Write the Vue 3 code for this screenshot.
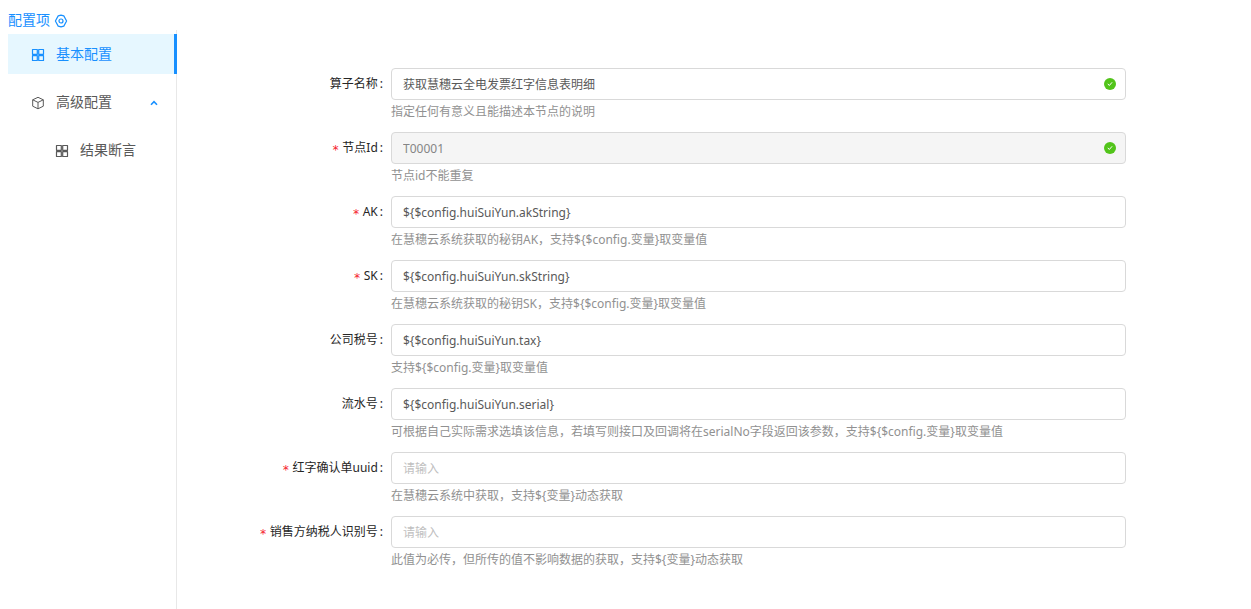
<template>
  <div class="config-page">
    <aside class="sidebar">
      <div class="sidebar-title">
        <span>配置项</span>
        <svg class="title-icon" viewBox="0 0 14 14">
          <path d="M4.2 1.9L7 1.2l2.8.7L12.6 7l-2.8 5.1-2.8.7-2.8-.7L1.4 7z" />
          <circle cx="7" cy="7" r="2" />
        </svg>
      </div>
      <ul class="menu">
        <li
          v-for="item in menuItems"
          :key="item.key"
          class="menu-item"
          :class="{ active: item.key === activeKey, nested: item.nested }"
          @click="selectItem(item)"
        >
          <svg v-if="item.icon === 'grid'" class="menu-icon grid" viewBox="0 0 14 14">
            <rect x="1.5" y="1.5" width="4.8" height="4.8" />
            <rect x="7.7" y="1.5" width="4.8" height="4.8" />
            <rect x="1.5" y="7.7" width="4.8" height="4.8" />
            <rect x="7.7" y="7.7" width="4.8" height="4.8" />
          </svg>
          <svg v-else class="menu-icon" viewBox="0 0 14 14">
            <path d="M7 1.3l5.3 2.5v6.4L7 12.8 1.7 10.2V3.8zM1.7 3.8L7 6.4l5.3-2.6M7 6.4v6.4" />
          </svg>
          <span class="menu-text">{{ item.label }}</span>
          <svg v-if="item.key === 'advanced'" class="menu-arrow" viewBox="0 0 8 6">
            <path d="M1 4.7L4 1.7l3 3" />
          </svg>
        </li>
      </ul>
    </aside>

    <form class="form" @submit.prevent>
      <div v-for="field in fields" :key="field.key" class="form-item">
        <label class="form-label" :for="field.key">
          <span v-if="field.required" class="required">*</span>
          <span class="label-text">{{ field.label }}</span>
          <span class="colon">:</span>
        </label>
        <div class="form-control">
          <div class="input-wrap" :class="{ disabled: field.disabled }">
            <input
              :id="field.key"
              v-model="field.value"
              type="text"
              placeholder="请输入"
              :disabled="field.disabled"
              autocomplete="off"
              spellcheck="false"
            />
            <svg v-if="field.valid" class="success-icon" viewBox="0 0 12 12">
              <circle cx="6" cy="6" r="6" />
              <path d="M3.8 5.8l1.5 1.7 2.8-3.2" />
            </svg>
          </div>
          <div class="form-extra">{{ field.extra }}</div>
        </div>
      </div>
    </form>
  </div>
</template>

<script setup>
import { ref, reactive } from 'vue';

const activeKey = ref('basic');

const menuItems = [
  { key: 'basic', label: '基本配置', icon: 'grid' },
  { key: 'advanced', label: '高级配置', icon: 'box' },
  { key: 'assert', label: '结果断言', icon: 'grid', nested: true }
];

const fields = reactive([
  {
    key: 'name',
    label: '算子名称',
    value: '获取慧穗云全电发票红字信息表明细',
    extra: '指定任何有意义且能描述本节点的说明',
    valid: true
  },
  {
    key: 'nodeId',
    label: '节点Id',
    value: 'T00001',
    extra: '节点id不能重复',
    required: true,
    disabled: true,
    valid: true
  },
  {
    key: 'ak',
    label: 'AK',
    value: '${$config.huiSuiYun.akString}',
    extra: '在慧穗云系统获取的秘钥AK，支持${$config.变量}取变量值',
    required: true
  },
  {
    key: 'sk',
    label: 'SK',
    value: '${$config.huiSuiYun.skString}',
    extra: '在慧穗云系统获取的秘钥SK，支持${$config.变量}取变量值',
    required: true
  },
  {
    key: 'tax',
    label: '公司税号',
    value: '${$config.huiSuiYun.tax}',
    extra: '支持${$config.变量}取变量值'
  },
  {
    key: 'serial',
    label: '流水号',
    value: '${$config.huiSuiYun.serial}',
    extra: '可根据自己实际需求选填该信息，若填写则接口及回调将在serialNo字段返回该参数，支持${$config.变量}取变量值'
  },
  {
    key: 'uuid',
    label: '红字确认单uuid',
    value: '',
    extra: '在慧穗云系统中获取，支持${变量}动态获取',
    required: true
  },
  {
    key: 'taxpayer',
    label: '销售方纳税人识别号',
    value: '',
    extra: '此值为必传，但所传的值不影响数据的获取，支持${变量}动态获取',
    required: true
  }
]);

function selectItem(item) {
  if (item.key !== 'advanced') {
    activeKey.value = item.key;
  }
}
</script>

<style>
body {
  margin: 0;
  background: #fff;
}
</style>

<style scoped>
.config-page {
  display: flex;
  height: 609px;
  overflow: hidden;
  font-family: 'Noto Sans', 'Noto Sans CJK SC', sans-serif;
  font-size: 12px;
  color: #262626;
}

.sidebar {
  display: flex;
  flex-direction: column;
  width: 169px;
  margin-left: 8px;
  flex-shrink: 0;
}

.sidebar-title {
  display: flex;
  align-items: center;
  gap: 4px;
  height: 20px;
  padding-top: 10px;
  font-size: 14px;
  color: #1890ff;
}

.sidebar-title span {
  padding-bottom: 2px;
}

.title-icon {
  width: 14px;
  height: 14px;
  margin-top: 2px;
  fill: none;
  stroke: currentColor;
  stroke-width: 1.2;
  stroke-linejoin: round;
}

.menu {
  flex: 1;
  margin: 0;
  padding: 4px 0 0;
  list-style: none;
  border-right: 1px solid #e8e8e8;
}

.menu-item {
  display: flex;
  align-items: center;
  height: 40px;
  margin: 0 -1px 8px 0;
  padding-left: 23px;
  padding-right: 19px;
  box-sizing: border-box;
  font-size: 14px;
  color: #595959;
  cursor: pointer;
}

.menu-item.nested {
  padding-left: 47px;
}

.menu-item.active {
  color: #1890ff;
  background: #e6f7ff;
  border-right: 3px solid #1890ff;
}

.menu-icon {
  width: 14px;
  height: 14px;
  margin-top: 2px;
  margin-right: 11px;
  fill: none;
  stroke: currentColor;
  stroke-width: 1;
  stroke-linejoin: round;
}

.menu-icon.grid {
  stroke-width: 1.2;
}

.menu-text {
  flex: 1;
  padding-bottom: 2px;
}

.menu-arrow {
  width: 8px;
  height: 6px;
  margin-top: 1px;
  fill: none;
  stroke: #1890ff;
  stroke-width: 1.6;
}

.form {
  flex: 1;
  padding-top: 68px;
}

.form-item {
  display: flex;
  height: 64px;
}

.form-label {
  display: flex;
  justify-content: flex-end;
  width: 206px;
  margin-right: 8px;
  line-height: 32px;
  white-space: nowrap;
}

.required {
  margin-right: 3px;
  font-family: 'DejaVu Sans Mono', monospace;
  font-size: 12px;
  line-height: 36px;
  height: 32px;
  color: #f5222d;
}

.colon {
  margin-left: 2px;
}

.form-control {
  width: 735px;
}

.input-wrap {
  display: flex;
  align-items: center;
  height: 32px;
  padding: 0 9px 0 11px;
  box-sizing: border-box;
  border: 1px solid #d9d9d9;
  border-radius: 4px;
}

.input-wrap.disabled {
  background: #f5f5f5;
}

input {
  flex: 1;
  min-width: 0;
  height: 30px;
  padding: 0;
  border: none;
  outline: none;
  background: transparent;
  font: inherit;
  color: #595959;
}

input:disabled {
  color: #858585;
  cursor: not-allowed;
}

input::placeholder {
  color: #bfbfbf;
}

.success-icon {
  width: 12px;
  height: 12px;
  fill: #52c41a;
}

.success-icon path {
  fill: none;
  stroke: #fff;
  stroke-width: 1;
}

.form-extra {
  line-height: 24px;
  white-space: nowrap;
  color: #919191;
}
</style>
